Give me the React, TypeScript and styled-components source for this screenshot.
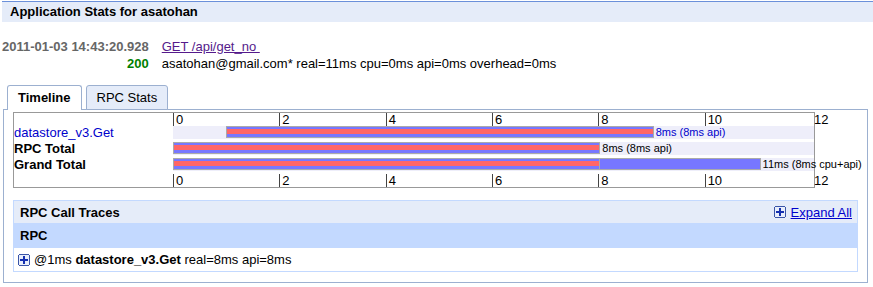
import * as React from "react";
import styled, { createGlobalStyle } from "styled-components";

const GlobalStyle = createGlobalStyle`
  body {
    margin: 0;
    background: #fff;
    color: #000;
    font-family: "Liberation Sans", Arial, sans-serif;
    font-size: 13px;
  }
`;

const MS = 641 / 12;

const Page = styled.div`
  padding-left: 2px;
`;

const Header = styled.div`
  margin-top: 1px;
  border-top: 1px solid #6b90da;
  background: #e5ecf9;
  height: 20px;
  line-height: 20px;
  padding-left: 8px;
  font-weight: bold;
`;

const Info = styled.div`
  display: grid;
  grid-template-columns: auto 1fr;
  column-gap: 13px;
  margin-top: 16px;
  line-height: 17px;
`;

const Stamp = styled.span`
  color: #666;
  font-weight: bold;
  justify-self: end;
`;

const Status = styled.span`
  color: #008000;
  font-weight: bold;
  justify-self: end;
`;

const UrlLink = styled.a`
  color: #551a8b;
  text-decoration: underline;
  justify-self: start;
`;

const Tabs = styled.div`
  display: flex;
  align-items: flex-end;
  gap: 4px;
  margin: 13px 0 -1px 1px;
  padding-left: 4px;
  position: relative;
  z-index: 1;
`;

const Tab = styled.div<{ $active?: boolean }>`
  border: 1px solid #9cb0d0;
  border-bottom-width: ${(p) => (p.$active ? 0 : 1)}px;
  border-radius: 3px 3px 0 0;
  background: ${(p) => (p.$active ? "#fff" : "#e5ecf9")};
  font-weight: ${(p) => (p.$active ? "bold" : "normal")};
  line-height: ${(p) => (p.$active ? 24 : 23)}px;
  padding: 0 10px;
`;

const Panel = styled.div`
  margin-left: 1px;
  width: 865px;
  box-sizing: border-box;
  border: 1px solid #9cb0d0;
  padding: 2px 9px 10px 9px;
`;

const Timeline = styled.div`
  width: 802px;
  box-sizing: border-box;
  border: 1px solid #999;
`;

const ScaleRow = styled.div`
  display: flex;
  height: 13px;
  line-height: 13px;
`;

const Spacer = styled.div`
  flex: none;
  width: 159px;
`;

const Tick = styled.div`
  flex: 1;
  border-left: 1px solid #444;
  padding-left: 2px;
`;

const TickEnd = styled.div`
  width: 0;
  padding-left: 3px;
  white-space: nowrap;
`;

const Row = styled.div`
  display: flex;
  height: 16px;
`;

const RowLabel = styled.div<{ $bold?: boolean; $color?: string }>`
  flex: none;
  width: 159px;
  line-height: 13px;
  white-space: nowrap;
  font-weight: ${(p) => (p.$bold ? "bold" : "normal")};
  color: ${(p) => p.$color || "#000"};
`;

const BarCell = styled.div`
  flex: none;
  width: 641px;
  height: 13px;
  background: #eeeefa;
  display: flex;
  align-items: flex-start;
`;

const Bar = styled.div`
  flex: none;
  height: 12px;
  box-sizing: border-box;
  border: 1px solid #aaa;
  background: #7777ff;
`;

const ApiBar = styled.div<{ $partial?: boolean }>`
  height: 100%;
  box-sizing: border-box;
  border-right: ${(p) => (p.$partial ? "1px solid #aaa" : "none")};
  background: linear-gradient(
    to bottom,
    transparent 2px,
    #ff6666 2px,
    #ff6666 7px,
    transparent 7px
  );
`;

const BarText = styled.span<{ $color?: string }>`
  margin-left: 2px;
  font-size: 11px;
  line-height: 12px;
  white-space: nowrap;
  color: ${(p) => p.$color || "#000"};
`;

const Traces = styled.div`
  margin-top: 12px;
  border: 1px solid #c3d9ff;
`;

const TracesHead = styled.div`
  display: flex;
  align-items: center;
  justify-content: space-between;
  height: 22px;
  padding: 0 5px 0 6px;
  background: #e5ecf9;
  font-weight: bold;
`;

const ExpandAll = styled.a`
  display: flex;
  align-items: center;
  gap: 5px;
  font-weight: normal;
  color: #0000cc;
  text-decoration: underline;
`;

const ColumnHead = styled.div`
  height: 25px;
  line-height: 25px;
  padding-left: 6px;
  background: #c3d9ff;
  font-weight: bold;
`;

const TraceRow = styled.div`
  display: flex;
  align-items: center;
  gap: 4px;
  height: 23px;
  padding-left: 4px;
`;

const PlusIcon = () => (
  <svg width="12" height="12" viewBox="0 0 12 12" shapeRendering="crispEdges">
    <rect x="0.5" y="0.5" width="11" height="11" rx="2" fill="#e8eefb" stroke="#3a55a8" />
    <rect x="5" y="2" width="2" height="8" fill="#1530b0" />
    <rect x="2" y="5" width="8" height="2" fill="#1530b0" />
  </svg>
);

interface Entry {
  label: string;
  bold?: boolean;
  color?: string;
  start: number;
  real: number;
  api: number;
  text: string;
}

const entries: Entry[] = [
  { label: "datastore_v3.Get", color: "#0000cc", start: 1, real: 8, api: 8, text: "8ms (8ms api)" },
  { label: "RPC Total", bold: true, start: 0, real: 8, api: 8, text: "8ms (8ms api)" },
  { label: "Grand Total", bold: true, start: 0, real: 11, api: 8, text: "11ms (8ms cpu+api)" },
];

const Scale = () => (
  <ScaleRow>
    <Spacer />
    {[0, 2, 4, 6, 8, 10].map((n) => (
      <Tick key={n}>{n}</Tick>
    ))}
    <TickEnd>12</TickEnd>
  </ScaleRow>
);

export default function App() {
  return (
    <Page>
      <GlobalStyle />
      <Header>Application Stats for asatohan</Header>
      <Info>
        <Stamp>2011-01-03 14:43:20.928</Stamp>
        <UrlLink href="#">GET /api/get_no&nbsp;</UrlLink>
        <Status>200</Status>
        <span>asatohan@gmail.com* real=11ms cpu=0ms api=0ms overhead=0ms</span>
      </Info>
      <Tabs>
        <Tab $active>Timeline</Tab>
        <Tab>RPC Stats</Tab>
      </Tabs>
      <Panel>
        <Timeline>
          <Scale />
          {entries.map((e) => (
            <Row key={e.label}>
              <RowLabel $bold={e.bold} $color={e.color}>
                {e.label}
              </RowLabel>
              <BarCell>
                <Bar style={{ marginLeft: e.start * MS, width: e.real * MS }}>
                  <ApiBar
                    $partial={e.api < e.real}
                    style={{ width: e.api < e.real ? e.api * MS - 1 : "100%" }}
                  />
                </Bar>
                <BarText $color={e.color}>{e.text}</BarText>
              </BarCell>
            </Row>
          ))}
          <Scale />
        </Timeline>
        <Traces>
          <TracesHead>
            <span>RPC Call Traces</span>
            <ExpandAll href="#">
              <PlusIcon />
              Expand All
            </ExpandAll>
          </TracesHead>
          <ColumnHead>RPC</ColumnHead>
          <TraceRow>
            <PlusIcon />
            <span>
              @1ms <b>datastore_v3.Get</b> real=8ms api=8ms
            </span>
          </TraceRow>
        </Traces>
      </Panel>
    </Page>
  );
}
